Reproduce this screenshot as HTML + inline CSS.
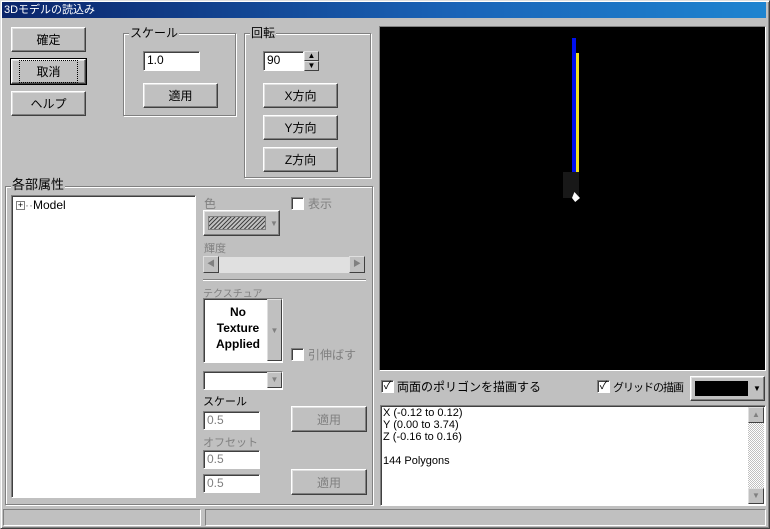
<!DOCTYPE html>
<html><head><meta charset="utf-8"><style>
*{box-sizing:border-box;margin:0;padding:0}
body{width:770px;height:529px;background:#c0c0c0;font-family:"Liberation Sans","Noto Sans CJK JP",sans-serif;font-size:12px;color:#000;position:relative;overflow:hidden}
.a{position:absolute}
.win{left:0;top:0;width:770px;height:529px;border:1px solid;border-color:#dfdfdf #404040 #404040 #dfdfdf;box-shadow:inset 1px 1px #fff,inset -1px -1px #808080}
.title{left:2px;top:2px;width:764px;height:16px;background:linear-gradient(90deg,#0a246a,#1a64b8 60%,#1e84d0);color:#fff;font-size:11px;line-height:16px;padding-left:2px}
.btn{border:1px solid;border-color:#fff #404040 #404040 #fff;box-shadow:inset -1px -1px #808080,inset 1px 1px #dfdfdf;text-align:center;font-size:12px;display:flex;align-items:center;justify-content:center}
.grp{border:1px solid #808080;box-shadow:1px 1px #fff,inset 1px 1px #fff}
.lbl{background:#c0c0c0;padding:0 1px;font-size:12px;line-height:12px}
.inp{background:#fff;border:1px solid;border-color:#808080 #fff #fff #808080;box-shadow:inset 1px 1px #404040;font-size:12px;line-height:17px;padding-left:3px}
.dis{color:#808080}
.chk{width:13px;height:13px;background:#fff;border:1px solid;border-color:#808080 #fff #fff #808080;box-shadow:inset 1px 1px #404040;font-size:11px;line-height:10px;text-align:center}
.sb{border:1px solid;border-color:#dfdfdf #404040 #404040 #dfdfdf;background:#c0c0c0;font-size:8px;color:#808080;text-align:center;line-height:14px}
</style></head><body>
<div class="a win"></div>
<div class="a title">3Dモデルの読込み</div>

<div class="a btn" style="left:11px;top:27px;width:75px;height:25px">確定</div>
<div class="a btn" style="left:11px;top:59px;width:75px;height:25px;outline:1px solid #000"><span style="border:1px dotted #000;padding:2px 16px">取消</span></div>
<div class="a btn" style="left:11px;top:91px;width:75px;height:25px">ヘルプ</div>

<div class="a grp" style="left:123px;top:33px;width:113px;height:83px"></div>
<div class="a lbl" style="left:129px;top:27px">スケール</div>
<div class="a inp" style="left:143px;top:51px;width:57px;height:20px">1.0</div>
<div class="a btn" style="left:143px;top:83px;width:75px;height:25px">適用</div>

<div class="a grp" style="left:244px;top:33px;width:127px;height:145px"></div>
<div class="a lbl" style="left:250px;top:27px">回転</div>
<div class="a inp" style="left:263px;top:51px;width:41px;height:20px">90</div>
<div class="a sb" style="left:304px;top:51px;width:15px;height:10px;line-height:8px;color:#000">▲</div>
<div class="a sb" style="left:304px;top:61px;width:15px;height:10px;line-height:8px;color:#000">▼</div>
<div class="a btn" style="left:263px;top:83px;width:75px;height:25px">X方向</div>
<div class="a btn" style="left:263px;top:115px;width:75px;height:25px">Y方向</div>
<div class="a btn" style="left:263px;top:147px;width:75px;height:25px">Z方向</div>

<div class="a grp" style="left:5px;top:186px;width:368px;height:319px"></div>
<div class="a lbl" style="left:11px;top:178px;font-size:13px;line-height:13px">各部属性</div>
<div class="a inp" style="left:11px;top:195px;width:185px;height:303px;line-height:14px;padding:2px 4px">
<span style="display:inline-block;width:9px;height:9px;border:1px solid #808080;font-size:9px;line-height:7px;text-align:center;vertical-align:middle">+</span><span style="color:#808080">··</span>Model</div>

<div class="a dis" style="left:204px;top:195px">色</div>
<div class="a chk" style="left:291px;top:197px"></div>
<div class="a dis" style="left:308px;top:195px">表示</div>
<div class="a btn" style="left:203px;top:210px;width:77px;height:26px;justify-content:flex-start;padding-left:4px"><div style="width:58px;height:14px;border:1px solid #808080;background:repeating-linear-gradient(135deg,#444 0 1px,#c0c0c0 1px 3px)"></div><span style="color:#808080;font-size:8px;margin-left:4px">▼</span></div>
<div class="a dis" style="left:204px;top:240px;font-size:11px">輝度</div>
<div class="a" style="left:203px;top:256px;width:163px;height:18px;background:#e0e0e0;border:1px solid #c0c0c0"></div>
<div class="a sb" style="left:203px;top:256px;width:16px;height:17px">◀</div>
<div class="a sb" style="left:349px;top:256px;width:16px;height:17px">▶</div>
<div class="a" style="left:203px;top:279px;width:163px;height:2px;border-top:1px solid #808080;border-bottom:1px solid #fff"></div>
<div class="a dis" style="left:203px;top:285px;font-size:10px">テクスチュア</div>
<div class="a inp" style="left:203px;top:298px;width:80px;height:65px;padding:0"><div style="position:absolute;left:6px;top:5px;width:56px;text-align:center;font-weight:bold;font-size:12px;line-height:16px">No<br>Texture<br>Applied</div><div class="sb" style="position:absolute;right:0;top:0;width:15px;height:62px;line-height:62px">▼</div></div>
<div class="a chk" style="left:291px;top:348px"></div>
<div class="a dis" style="left:308px;top:346px">引伸ばす</div>
<div class="a inp" style="left:203px;top:371px;width:80px;height:19px"><div class="sb" style="position:absolute;right:0;top:0;width:15px;height:16px;line-height:14px">▼</div></div>
<div class="a" style="left:203px;top:393px;font-size:11px">スケール</div>
<div class="a inp dis" style="left:203px;top:411px;width:57px;height:19px">0.5</div>
<div class="a btn dis" style="left:291px;top:406px;width:76px;height:26px">適用</div>
<div class="a dis" style="left:203px;top:434px;font-size:11px">オフセット</div>
<div class="a inp dis" style="left:203px;top:450px;width:57px;height:19px">0.5</div>
<div class="a inp dis" style="left:203px;top:474px;width:57px;height:19px">0.5</div>
<div class="a btn dis" style="left:291px;top:469px;width:76px;height:26px">適用</div>

<div class="a" style="left:379px;top:26px;width:387px;height:345px;background:#000;border:1px solid;border-color:#808080 #fff #fff #808080"></div>
<div class="a" style="left:572px;top:38px;width:4px;height:136px;background:#0010f0"></div>
<div class="a" style="left:576px;top:53px;width:3px;height:121px;background:#f0e020"></div>
<div class="a" style="left:563px;top:172px;width:16px;height:26px;background:#181818"></div>
<div class="a" style="left:572px;top:192px;width:8px;height:10px;background:#fff;clip-path:polygon(30% 0,100% 60%,40% 100%,0 60%)"></div>

<div class="a chk" style="left:381px;top:380px">✓</div>
<div class="a" style="left:397px;top:378px">両面のポリゴンを描画する</div>
<div class="a chk" style="left:597px;top:380px">✓</div>
<div class="a" style="left:613px;top:379px;font-size:11px;letter-spacing:-1px">グリッドの描画</div>
<div class="a btn" style="left:690px;top:376px;width:75px;height:25px;justify-content:flex-start;padding-left:4px"><div style="width:53px;height:15px;background:#000"></div><span style="font-size:8px;margin-left:5px">▼</span></div>

<div class="a inp" style="left:380px;top:405px;width:386px;height:101px;font-size:11px;line-height:12px;padding:1px 2px">X (-0.12 to 0.12)<br>Y (0.00 to 3.74)<br>Z (-0.16 to 0.16)<br><br>144 Polygons</div>
<div class="a" style="left:748px;top:407px;width:16px;height:97px;background:repeating-conic-gradient(#c0c0c0 0 25%,#fff 0 50%) 0 0/2px 2px"></div>
<div class="a sb" style="left:748px;top:407px;width:16px;height:16px">▲</div>
<div class="a sb" style="left:748px;top:488px;width:16px;height:16px">▼</div>

<div class="a" style="left:3px;top:509px;width:198px;height:17px;border:1px solid;border-color:#808080 #fff #fff #808080"></div>
<div class="a" style="left:205px;top:509px;width:561px;height:17px;border:1px solid;border-color:#808080 #fff #fff #808080"></div>
</body></html>
